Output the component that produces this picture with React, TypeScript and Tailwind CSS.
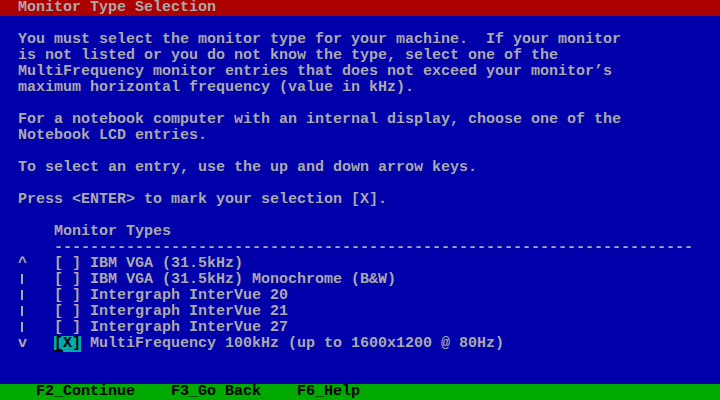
import React from "react";

const Row = ({ children, className = "" }: { children?: React.ReactNode; className?: string }) => (
  <div className={`h-[16px] leading-[16px] whitespace-pre ${className}`}>{children ?? " "}</div>
);

const Bar = () => (
  <span className="relative inline-block w-[9px] h-[16px] align-top">
    <span className="absolute left-[3px] top-[2px] w-[2px] h-[10px] bg-[#aaaaaa]" />
  </span>
);

export default function App() {
  const dashes = "-".repeat(71);
  const items = [
    ["^", "IBM VGA (31.5kHz)"],
    ["|", "IBM VGA (31.5kHz) Monochrome (B&W)"],
    ["|", "Intergraph InterVue 20"],
    ["|", "Intergraph InterVue 21"],
    ["|", "Intergraph InterVue 27"],
  ];
  return (
    <div
      className="w-[720px] h-[400px] bg-[#0000aa] text-[#aaaaaa] text-[15px] font-bold overflow-hidden flex flex-col"
      style={{ fontFamily: '"Liberation Mono", "DejaVu Sans Mono", monospace' }}
    >
      <Row className="bg-[#aa0000]">{"  Monitor Type Selection"}</Row>
      <Row />
      <Row>{"  You must select the monitor type for your machine.  If your monitor"}</Row>
      <Row>{"  is not listed or you do not know the type, select one of the"}</Row>
      <Row>{"  MultiFrequency monitor entries that does not exceed your monitor’s"}</Row>
      <Row>{"  maximum horizontal frequency (value in kHz)."}</Row>
      <Row />
      <Row>{"  For a notebook computer with an internal display, choose one of the"}</Row>
      <Row>{"  Notebook LCD entries."}</Row>
      <Row />
      <Row>{"  To select an entry, use the up and down arrow keys."}</Row>
      <Row />
      <Row>{"  Press <ENTER> to mark your selection [X]."}</Row>
      <Row />
      <Row>{"      Monitor Types"}</Row>
      <Row>{"      " + dashes}</Row>
      {items.map(([m, t], i) => (
        <Row key={i}>
          {"  "}
          {m === "|" ? <Bar /> : m}
          {`   [ ] ${t}`}
        </Row>
      ))}
      <Row>
        {"  v   "}
        <span className="relative inline-block bg-[#00aaaa] text-black h-[16px]">
          {"[X]"}
          <span className="absolute left-0 top-[14px] w-[9px] h-[2px] bg-black" />
        </span>
        {" MultiFrequency 100kHz (up to 1600x1200 @ 80Hz)"}
      </Row>
      <Row />
      <Row />
      <Row className="bg-[#00aa00] text-black">{"    F2_Continue    F3_Go Back    F6_Help"}</Row>
    </div>
  );
}
